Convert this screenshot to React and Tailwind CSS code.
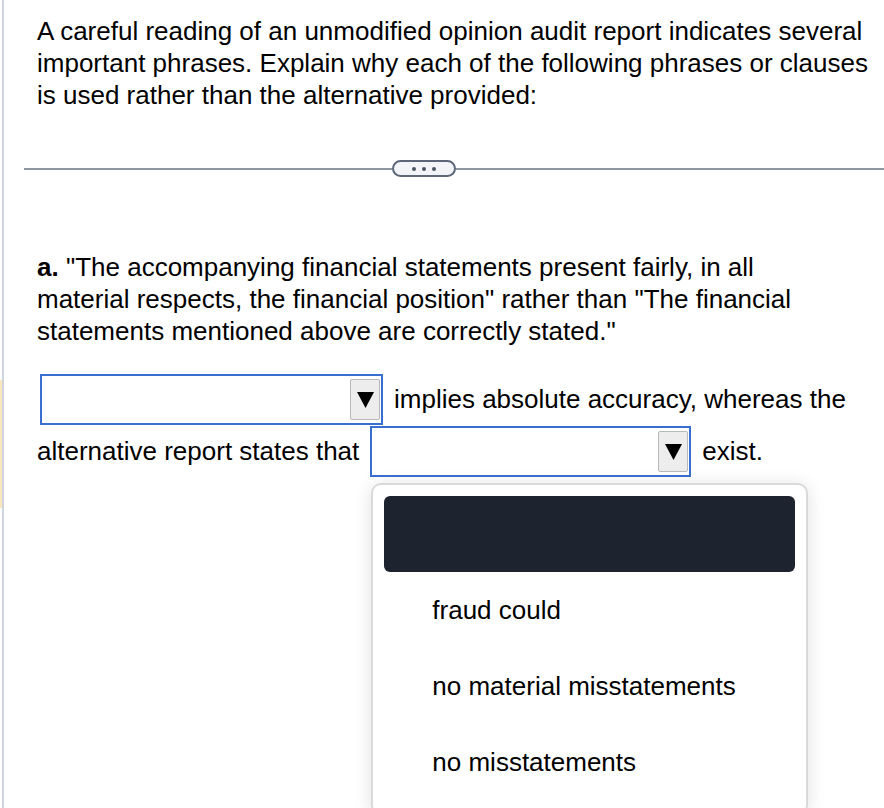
import React from 'react';

const Arrow = () => (
  <div className="flex h-[41px] w-[30px] items-center justify-center rounded-[2px] border border-[#b9b9b9] bg-[#ededed]">
    <svg width="17" height="16" viewBox="0 0 17 16">
      <polygon points="0,0 17,0 8.5,16" fill="#000" />
    </svg>
  </div>
);

const SelectBox = ({ width }) => (
  <div
    className="flex h-[51px] shrink-0 items-center justify-end border-2 border-[#3a6fd2] bg-white pr-[1px]"
    style={{ width }}
  >
    <Arrow />
  </div>
);

const options = ['fraud could', 'no material misstatements', 'no misstatements'];

const App = () => {
  return (
    <div
      className="flex h-[808px] w-[884px] overflow-hidden bg-white text-[26px] text-black"
      style={{ fontFamily: '"Liberation Sans", Arial, sans-serif' }}
    >
      <div className="w-[2px] shrink-0">
        <div className="mt-[380px] h-[128px] bg-[#f7e7b9]" />
      </div>
      <div className="w-[2px] shrink-0 bg-[#cfd4e0]" />

      <div className="flex-1 pl-[20px] pt-[15px]">
        <p className="ml-[13px] w-[840px] leading-[32px]">
          A careful reading of an unmodified opinion audit report indicates several important
          phrases. Explain why each of the following phrases or clauses is used rather than the
          alternative provided:
        </p>

        <div className="mt-[49px] flex h-[17px] items-center">
          <div className="h-[2px] w-[368px] bg-[#8f97a3]" />
          <div className="flex h-[17px] w-[64px] items-center justify-center gap-[6px] rounded-full border-2 border-[#5c6878] bg-[#f2f4f7]">
            <span className="h-[4px] w-[4px] rounded-full bg-[#4b5563]" />
            <span className="h-[4px] w-[4px] rounded-full bg-[#4b5563]" />
            <span className="h-[4px] w-[4px] rounded-full bg-[#4b5563]" />
          </div>
          <div className="h-[2px] flex-1 bg-[#8f97a3]" />
        </div>

        <p className="ml-[13px] mt-[74px] w-[790px] leading-[32px]">
          <b>a.</b> "The accompanying financial statements present fairly, in all material
          respects, the financial position" rather than "The financial statements mentioned above
          are correctly stated."
        </p>

        <div className="ml-[13px] mt-[27px]">
          <div className="flex h-[52px] items-start">
            <div className="ml-[3px]">
              <SelectBox width={343} />
            </div>
            <span className="ml-[11px] mt-[9px] leading-[32px]">
              implies absolute accuracy, whereas the
            </span>
          </div>
          <div className="flex h-[52px] items-start">
            <span className="mt-[9px] leading-[32px]">alternative report states that</span>
            <div className="relative ml-[11px]">
              <SelectBox width={321} />
              <div className="absolute left-[1px] top-[57px] h-[332px] w-[437px] rounded-[10px] border-2 border-[#dadada] bg-white p-[11px] shadow-[0_2px_18px_rgba(0,0,0,0.12)]">
                <div className="h-[76px] rounded-[6px] bg-[#1e2330]" />
                {options.map((o) => (
                  <div key={o} className="flex h-[76px] items-center pl-[48px]">
                    {o}
                  </div>
                ))}
              </div>
            </div>
            <span className="ml-[11px] mt-[9px] leading-[32px]">exist.</span>
          </div>
        </div>
      </div>
    </div>
  );
};

export default App;
